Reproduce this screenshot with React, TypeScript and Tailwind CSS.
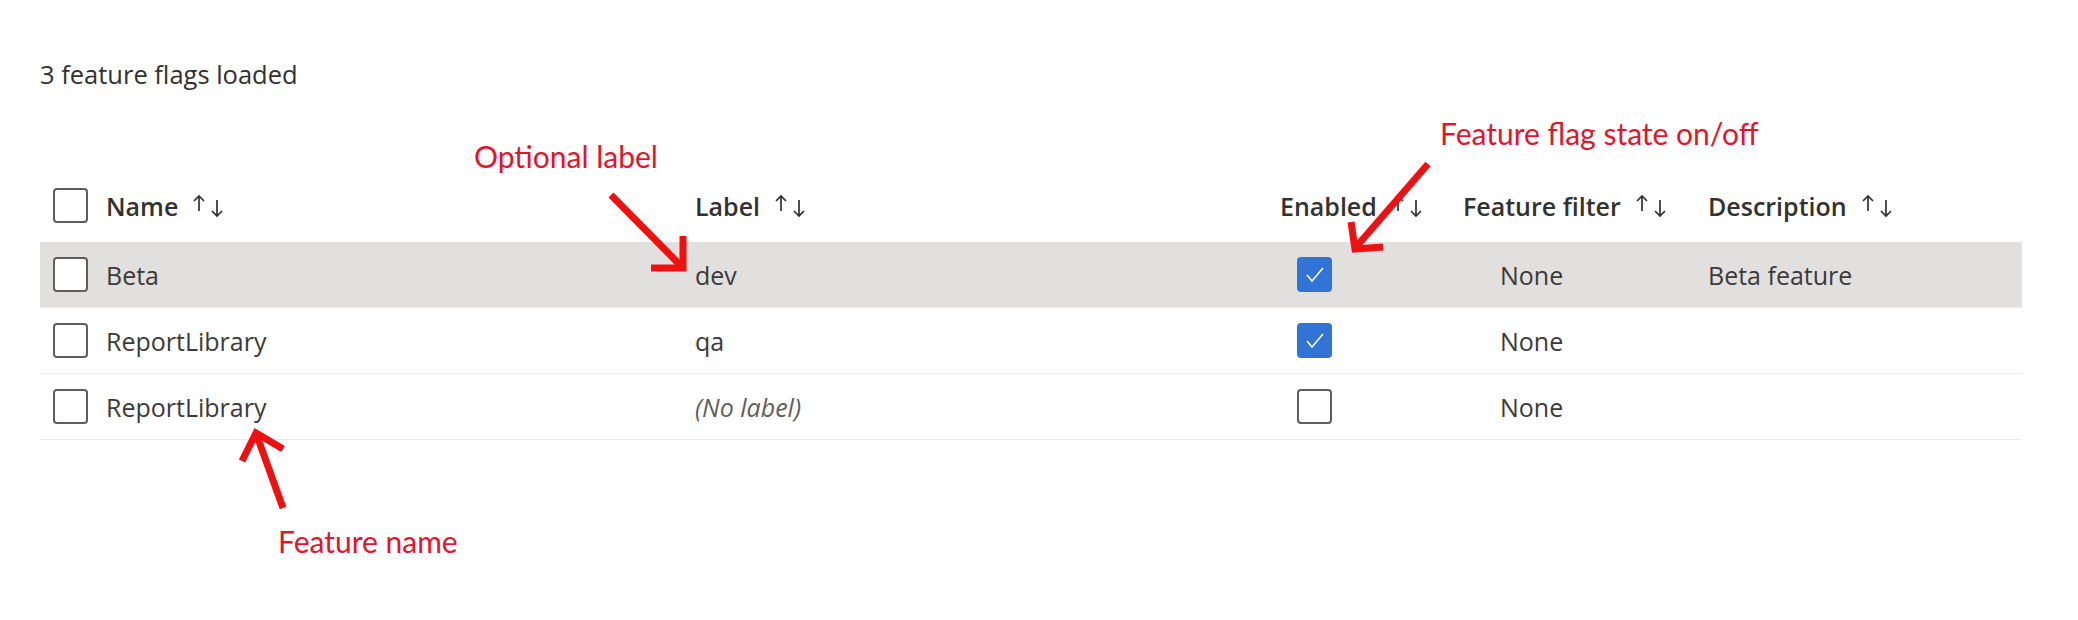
import React from 'react';

interface Flag {
  id: string;
  name: string;
  label: string | null;
  enabled: boolean;
  filter: string;
  description: string;
}

const flags: Flag[] = [
  { id: '1', name: 'Beta', label: 'dev', enabled: true, filter: 'None', description: 'Beta feature' },
  { id: '2', name: 'ReportLibrary', label: 'qa', enabled: true, filter: 'None', description: '' },
  { id: '3', name: 'ReportLibrary', label: null, enabled: false, filter: 'None', description: '' },
];

const cols = 'grid grid-cols-[53px_589px_585px_183px_245px_1fr] items-center pl-[13px]';

function SortIcon() {
  return (
    <svg width="38" height="26" viewBox="0 0 38 26" fill="none" stroke="#323130" strokeWidth="1.7">
      <path d="M9 18V3M4 8l5-5 5 5" />
      <path d="M27 7v16M22 18l5 5 5-5" />
    </svg>
  );
}

function Checkbox({ checked = false }: { checked?: boolean }) {
  if (checked) {
    return (
      <div className="w-[35px] h-[35px] rounded-[4px] bg-[#3274d6] flex items-center justify-center">
        <svg width="35" height="35" viewBox="0 0 35 35" fill="none" stroke="#ffffff" strokeWidth="1.6">
          <path d="M10 18l5 6 11-13" />
        </svg>
      </div>
    );
  }
  return <div className="w-[35px] h-[35px] rounded-[4px] border-[2.5px] border-[#605e5c] bg-white" />;
}

function HeaderCell({ title }: { title: string }) {
  return (
    <div className="flex items-center gap-[12px]">
      <span className="font-semibold text-[#323130]">{title}</span>
      <SortIcon />
    </div>
  );
}

export default function App() {
  return (
    <main className="relative w-[2078px] h-[620px] bg-white font-['Open_Sans',sans-serif] text-[25px] leading-[34px] text-[#323130]">
      <div className="pt-[57px] pl-[40px] text-[25.5px] text-[#323130]">3 feature flags loaded</div>

      <section className="mt-[90px] ml-[40px] w-[1982px]">
        <div className={`${cols} h-[61px] pb-[12px]`}>
          <Checkbox />
          <HeaderCell title="Name" />
          <HeaderCell title="Label" />
          <HeaderCell title="Enabled" />
          <HeaderCell title="Feature filter" />
          <HeaderCell title="Description" />
        </div>

        {flags.map((flag, i) => (
          <div
            key={flag.id}
            className={`${cols} h-[66px] border-b border-[#edebe9] ${i === 0 ? 'bg-[#e1e0df]' : 'bg-white'}`}
          >
            <Checkbox />
            <span className="text-[#3b3a39]">{flag.name}</span>
            {flag.label ? (
              <span className="text-[#3b3a39]">{flag.label}</span>
            ) : (
              <span className="italic text-[#605e5c]">(No label)</span>
            )}
            <div className="pl-[17px]">
              <Checkbox checked={flag.enabled} />
            </div>
            <span className="pl-[37px] text-[#3b3a39]">{flag.filter}</span>
            <span className="text-[#3b3a39]">{flag.description}</span>
          </div>
        ))}
      </section>

      {/* annotations */}
      <div className="absolute left-[474px] top-[138px] font-['Lato',sans-serif] text-[30px] leading-[36px] text-[#e3142d]">
        Optional label
      </div>
      <div className="absolute left-[1440px] top-[115px] font-['Lato',sans-serif] text-[30px] leading-[36px] text-[#e3142d]">
        Feature flag state on/off
      </div>
      <div className="absolute left-[278px] top-[523px] font-['Lato',sans-serif] text-[30px] leading-[36px] text-[#e3142d]">
        Feature name
      </div>

      <svg className="absolute inset-0 pointer-events-none" width="2078" height="620" fill="none" stroke="#ee1111" strokeWidth="7">
        <path d="M611 195L682 267" />
        <polyline points="683,236 683,268 651,268" strokeLinejoin="miter" />
        <path d="M1428 164L1356 247" />
        <polyline points="1351,222 1355,249 1383,247" strokeLinejoin="miter" />
        <path d="M283 508L257 436" />
        <polyline points="242,461 256,433 283,449" strokeLinejoin="miter" />
      </svg>
    </main>
  );
}
